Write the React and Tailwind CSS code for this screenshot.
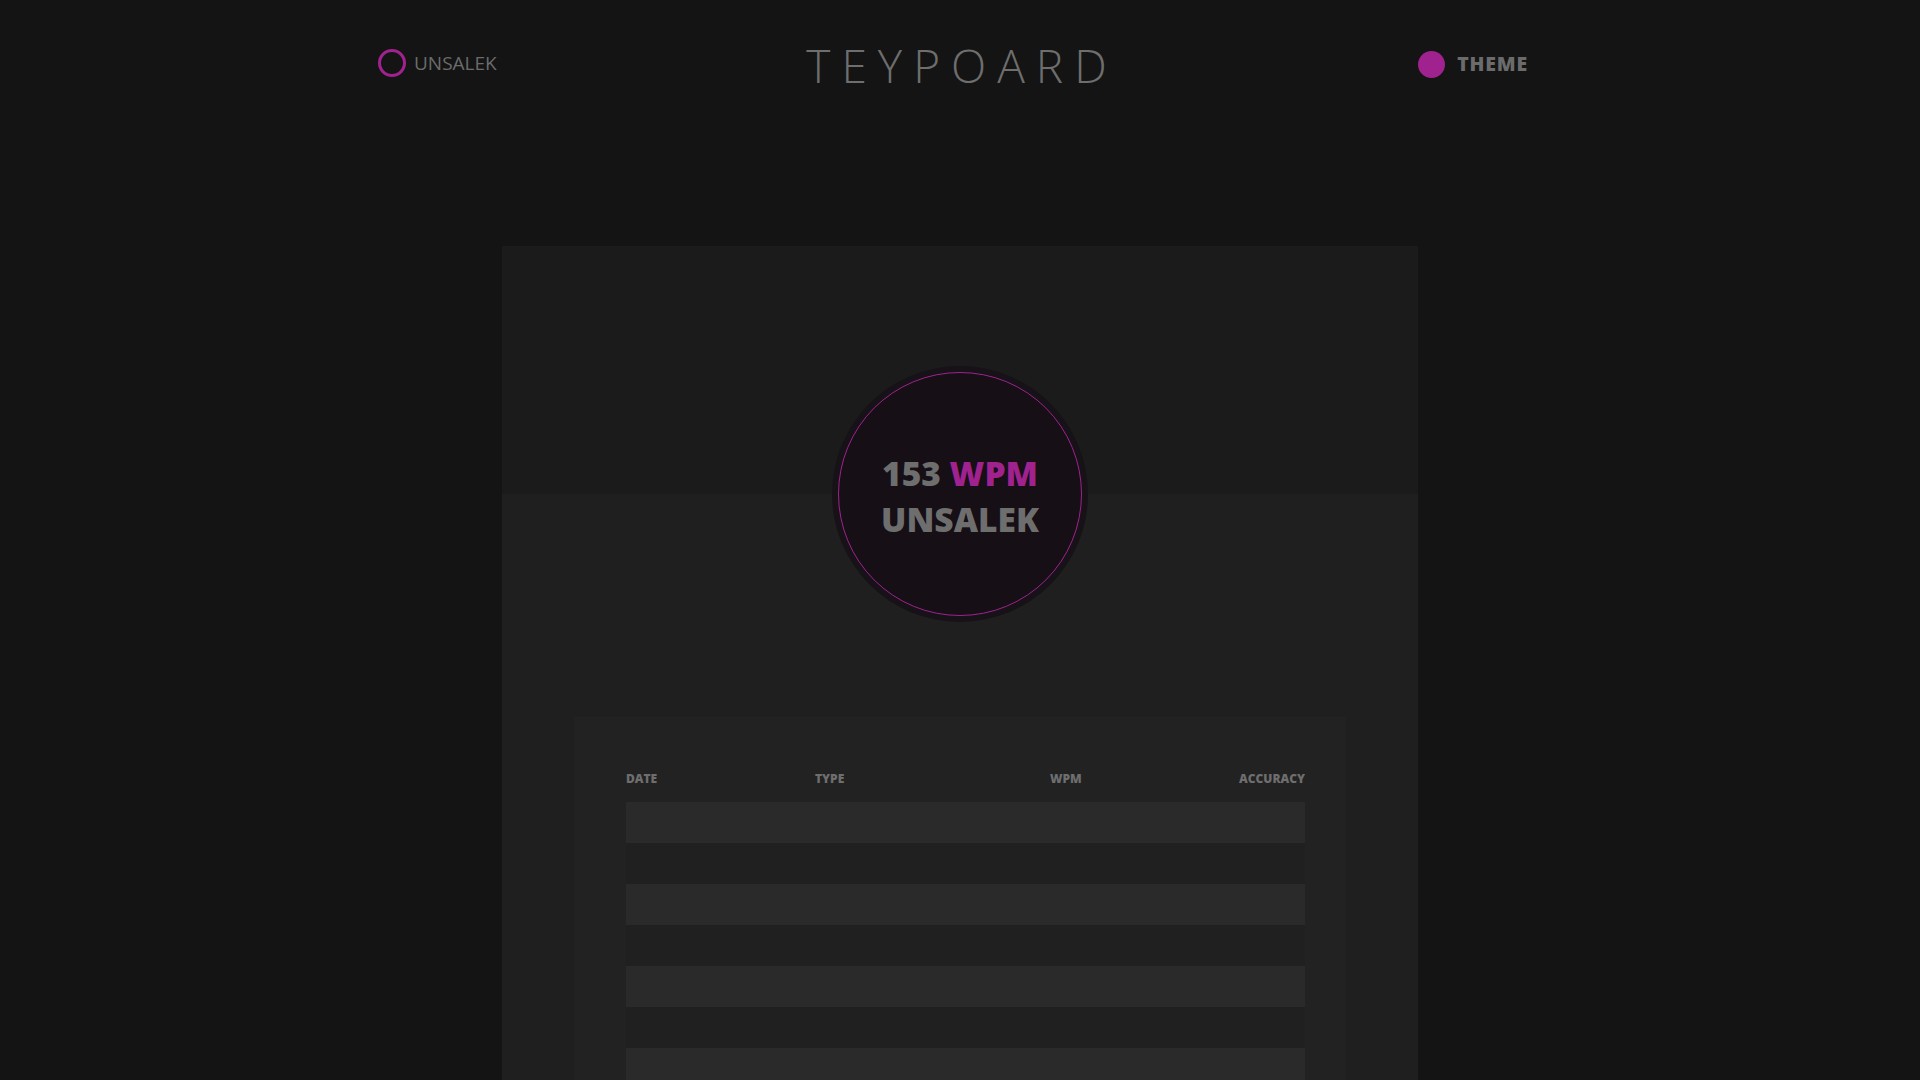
import React from "react";

export default function App() {
  const rows = [0, 1, 2, 3, 4, 5, 6, 7];
  return (
    <div
      className="w-full h-[1080px] overflow-hidden bg-[#141414]"
      style={{ fontFamily: '"Open Sans", "Noto Sans", sans-serif' }}
    >
      {/* Header */}
      <header className="h-[127px] grid grid-cols-[1fr_auto_1fr] items-center pl-[378px] pr-[392px]">
        <div className="flex items-center gap-[8px] justify-self-start mb-[1px]">
          <span className="block w-[28px] h-[28px] rounded-full border-[3px] border-[#a0228f]" />
          <span className="text-[19px] text-[#6b6b6b] leading-none">UNSALEK</span>
        </div>
        <div className="ml-[18px] mt-[2px] text-[46px] font-light tracking-[11px] text-[#6e6e6e] leading-none">
          TEYPOARD
        </div>
        <div className="flex items-center gap-[12px] justify-self-end mt-[1px]">
          <span className="block w-[27px] h-[27px] rounded-full bg-[#a0228f]" />
          <span className="text-[19.5px] font-extrabold tracking-[0.8px] text-[#6b6b6b] leading-none">THEME</span>
        </div>
      </header>

      {/* Panel */}
      <main className="mt-[119px] mx-auto w-[916px] h-[900px] pt-[120px] bg-[linear-gradient(to_bottom,#1b1b1b_248px,#1f1f1f_248px)]">
        <div className="mx-auto w-[256px] h-[256px] rounded-full bg-[#171217] p-[6px]">
          <div className="w-full h-full rounded-full border border-[#a0228f] bg-[#160f16] flex flex-col items-center justify-center pt-[4px]">
            <div className="text-[33.5px] font-extrabold leading-[46px] text-[#6e6e6e]">
              153 <span className="text-[#a0228f]">WPM</span>
            </div>
            <div className="text-[33.5px] font-extrabold leading-[46px] text-[#6e6e6e]">UNSALEK</div>
          </div>
        </div>

        <section className="mt-[95px] mx-auto w-[772px] h-[600px] bg-[#222222] pl-[52px] pr-[41px] pt-[54px]">
          <div className="grid grid-cols-[189px_235px_1fr_1fr] text-[12px] font-extrabold leading-[16px] text-[#6e6e6e] mb-[15px]">
            <span>DATE</span>
            <span>TYPE</span>
            <span>WPM</span>
            <span className="text-right">ACCURACY</span>
          </div>
          <div className="flex flex-col">
            {rows.map((i) => (
              <div
                key={i}
                className={i % 2 === 0 ? "h-[41px] bg-[#2a2a2a]" : "h-[41px] bg-[#202020]"}
              />
            ))}
          </div>
        </section>
      </main>
    </div>
  );
}
